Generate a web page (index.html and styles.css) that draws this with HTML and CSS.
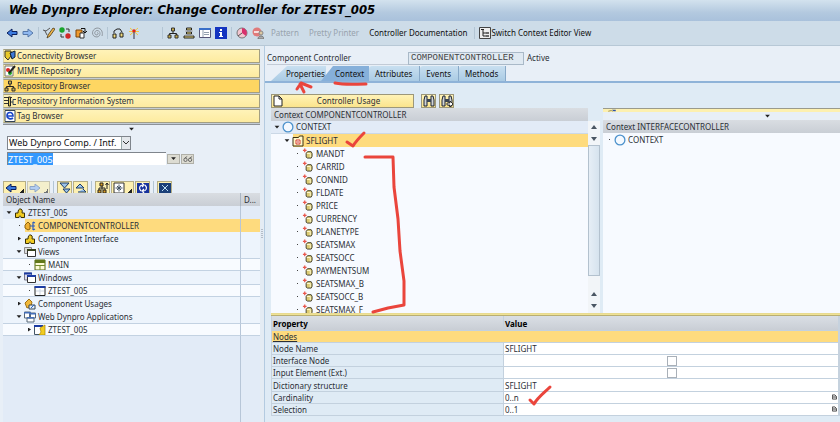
FILE: index.html
```html
<!DOCTYPE html>
<html lang="en">
<head>
    <meta charset="UTF-8">
    <meta name="viewport" content="width=device-width, initial-scale=1.0">
    <title>Web Dynpro Explorer</title>
    <link rel="stylesheet" href="styles.css">
</head>
<body>
    <!-- icon set -->
    <svg class="defs" width="0" height="0">
        <symbol id="i-back" viewBox="0 0 12 12"><path d="M1 6l5-4v2.500h5v3H6V10z" fill="#3b7be0" stroke="#0a1f5c"/></symbol>
        <symbol id="i-fwd" viewBox="0 0 12 12"><path d="M11 6L6 2v2.500H1v3h5V10z" fill="#8fb8f0" stroke="#5577a8"/></symbol>
        <symbol id="i-edit" viewBox="0 0 12 12"><path d="M0 3l3 1 4-3M2 4l2 4" stroke="#555" fill="none"/><path d="M10 1L5 8l-1 3 3-2 5-7z" fill="#f0b64a" stroke="#4a3a1a" stroke-width=".8"/></symbol>
        <symbol id="i-toggle" viewBox="0 0 12 12"><circle cx="3" cy="3" r="2.700" fill="#19a52c"/><circle cx="9" cy="9" r="2.700" fill="#d02828"/><path d="M7 2h3v3M5 10H2V7" stroke="#333" fill="none"/></symbol>
        <symbol id="i-copy" viewBox="0 0 12 12"><path d="M1 3h6v7H1z" fill="#f09a2e" stroke="#7a4408"/><path d="M5 6h4v5H5z" fill="#fff" stroke="#333"/><path d="M6 1.500h4V5M8 4l2 2 2-2" stroke="#111" fill="none"/></symbol>
        <symbol id="i-spiral" viewBox="0 0 12 12"><path d="M6 6c1-1 2 1 0 2-3 0-3-4 0-4.500 4 0 4 6 0 6.500-6 0-6-8 0-9 5 0 6 5 5 8" fill="none" stroke="#8f979f"/></symbol>
        <symbol id="i-where" viewBox="0 0 12 12"><path d="M2 6V4l3-2M5 2h3l2 3" stroke="#222" fill="none"/><path d="M1 7h3v4H1zM8 6h3v4H8z" fill="#f2dc7c" stroke="#222"/></symbol>
        <symbol id="i-wand" viewBox="0 0 12 12"><path d="M2 1l8 7M10 1L2 8M1 4.500h10" stroke="#f2c840"/><circle cx="6" cy="4" r="1.700" fill="#e02020"/><path d="M6 5v7" stroke="#667" stroke-width="1.500"/></symbol>
        <symbol id="i-tree" viewBox="0 0 12 12"><path d="M6 4v3M2.500 8V6.500h7V8" stroke="#222" fill="none"/><path d="M4.500 1h3v3h-3zM1 8h3v3H1zM8 8h3v3H8z" fill="#c9ad45" stroke="#333"/></symbol>
        <symbol id="i-stack" viewBox="0 0 12 12"><path d="M3.500 1h5v2h-5zM3.500 5h5v2h-5zM1 9h10v2H1z" fill="#f0dc7a" stroke="#222"/><path d="M2 4h8M2 8h8" stroke="#aaa"/></symbol>
        <symbol id="i-list" viewBox="0 0 12 12"><path d="M.5 1.500h11v9H.5z" fill="#fff" stroke="#557"/><path d="M0 1h12v2H0z" fill="#3a6fc8"/><path d="M4 3v7M5 5.500h5M5 7.500h5" stroke="#789" stroke-width=".8"/></symbol>
        <symbol id="i-info" viewBox="0 0 12 12"><path d="M0 0h12v12H0z" fill="#1434c0"/><path d="M5 2h2v2H5zM4 5h3v4h1v1H4V9h1V6H4z" fill="#fff"/></symbol>
        <symbol id="i-pie" viewBox="0 0 12 12"><circle cx="6" cy="6" r="5" fill="#f3c6d0" stroke="#777"/><path d="M6 6V1a5 5 0 0 1 4 8z" fill="#d8306c"/><path d="M6 6L2 9" stroke="#555"/></symbol>
        <symbol id="i-user" viewBox="0 0 12 12"><circle cx="5" cy="5" r="4.500" fill="#e07a7a"/><path d="M2 5h5" stroke="#fff" stroke-width="1.500"/><circle cx="9" cy="6" r="2" fill="#dcc7a0" stroke="#888"/><path d="M6 12c0-4 6-4 6 0z" fill="#aaa" stroke="#777"/></symbol>
        <symbol id="i-switch" viewBox="0 0 12 12"><path d="M.5.5h11v11H.5z" fill="#eee" stroke="#444"/><path d="M2 2.500h3M4 3v6h3M4 6h3" stroke="#222" fill="none"/><path d="M7 5h3v2H7zM7 8h3v2H7z" fill="#6a6a6a"/></symbol>
        <symbol id="i-conn" viewBox="0 0 12 12"><path d="M1 1h6v5l-3 4-3-3z" fill="#e8c82a" stroke="#333"/><path d="M6 3l5-2v6L8 9z" fill="#3f79d8" stroke="#123"/></symbol>
        <symbol id="i-mime" viewBox="0 0 12 12"><path d="M1 1h8v10H1z" fill="#fff" stroke="#777"/><circle cx="4" cy="5" r="2" fill="#d22"/><circle cx="6" cy="8" r="2" fill="#2a2"/><path d="M11 1L5 8" stroke="#222" stroke-width="2"/></symbol>
        <symbol id="i-ris" viewBox="0 0 12 12"><path d="M0 2.500h8M0 5.500h4M0 8.500h4" stroke="#333"/><path d="M4.500 2h2v9h-2z" fill="#d8c45a" stroke="#222"/><path d="M12 4.500H9v5h3M7 7h2" fill="none" stroke="#345"/></symbol>
        <symbol id="i-tag" viewBox="0 0 12 12"><path d="M1 .5h10v11H1z" fill="#fff" stroke="#345"/><path d="M3 6h6c0-5-6-4-6-.5S7 9.500 9 8" fill="none" stroke="#1846c8" stroke-width="1.600"/></symbol>
        <symbol id="i-glasses" viewBox="0 0 12 12"><circle cx="3" cy="7" r="2" fill="none" stroke="#555"/><circle cx="8.500" cy="7" r="2" fill="none" stroke="#555"/><path d="M2 5l3-2M8 5l3-2" stroke="#555"/></symbol>
        <symbol id="i-down" viewBox="0 0 12 12"><path d="M1 1h9L5.500 6zM4 7h7l-3.500 4z" fill="#9cc4ec" stroke="#1d3c66"/></symbol>
        <symbol id="i-up" viewBox="0 0 12 12"><path d="M1 6l4-4 4 4zM3 10h8L8 7" fill="#9cc4ec" stroke="#1d3c66"/></symbol>
        <symbol id="i-hier" viewBox="0 0 12 12"><path d="M5 3v5M2 9V6h6v3M10 1v6M8.500 3L10 1l1.500 2" stroke="#222" fill="none"/><path d="M3 1h3v3H3zM1 8h3v3H1zM6 8h3v3H6z" fill="#e0a020" stroke="#222"/></symbol>
        <symbol id="i-star" viewBox="0 0 12 12"><path d="M1 1h10v10H1z" fill="#fff" stroke="#333"/><path d="M6 2.500v7M2.500 6h7M4 4l4 4M8 4L4 8" stroke="#456"/></symbol>
        <symbol id="i-refresh" viewBox="0 0 12 12"><path d="M0 1h12v10H0z" fill="#17329c"/><path d="M4 9C1 6 3 3 6 3M8 3c3 3 1 6-2 6M5 1l2 2-2 2M7 7L5 9l2 2" fill="none" stroke="#fff" stroke-width="1.200"/></symbol>
        <symbol id="i-full" viewBox="0 0 12 12"><path d="M0 1h12v10H0z" fill="#1b4078"/><path d="M3 3l6 6M9 3L3 9" stroke="#bfe0f4"/></symbol>
        <symbol id="i-comp" viewBox="0 0 12 12"><path d="M1.500 6h2.500C4 3 5 1.500 7 2c2 1 1 3 1 4h2.500v4.500H7c0-2-2-2-2 0H1.500z" fill="#f0cb22" stroke="#3a3005"/></symbol>
        <symbol id="i-ctrl" viewBox="0 0 12 12"><path d="M1 5l3-3 2 2v5l-2 1-3-2z" fill="#f0b030" stroke="#8a6010"/><path d="M6 6h5M9 2v8M9 2l2 1M9 10l2-1" stroke="#2a5ac0" stroke-width="1.200" fill="none"/></symbol>
        <symbol id="i-views" viewBox="0 0 12 12"><path d="M.5 1.500h7v6h-7z" fill="#ddd" stroke="#888"/><path d="M3.500 3.500h8v7h-8z" fill="#fff" stroke="#333"/><path d="M3 3h9v2H3z" fill="#35401c"/></symbol>
        <symbol id="i-view" viewBox="0 0 12 12"><path d="M1 1h10v10H1z" fill="#fdfbd6" stroke="#536612"/><path d="M1 1h10v3H1z" fill="#61781a"/><path d="M1 6.500h10M6 7v4" stroke="#758c2c"/></symbol>
        <symbol id="i-wins" viewBox="0 0 12 12"><path d="M.5 1h7v7h-7z" fill="#dde" stroke="#778"/><path d="M3.500 3.500h8v7h-8z" fill="#fff" stroke="#333"/><path d="M0 .5h8v2H0zM3 3h9v2H3z" fill="#1c3ca4"/></symbol>
        <symbol id="i-win" viewBox="0 0 12 12"><path d="M1 1.500h10v9H1z" fill="#fff" stroke="#222"/><path d="M.5 1h11v2H.5z" fill="#1c3ca4"/><path d="M6 4v6M2 6h8" stroke="#cdd6e2"/></symbol>
        <symbol id="i-usage" viewBox="0 0 12 12"><path d="M1 5l4-4 3 3-1 4-4 2z" fill="#f0b83a" stroke="#a06f10"/><path d="M5 7h6v4H5z" fill="#e8eef6" stroke="#345"/><path d="M7 10l3-3" stroke="#26c"/></symbol>
        <symbol id="i-apps" viewBox="0 0 12 12"><path d="M.5 1h6v6h-6zM5.500 2h6v5h-6zM3 6.500h7V11H3z" fill="#fff" stroke="#567"/><path d="M0 1h7v1.500H0zM5 2h7v1.500H5zM3 6h7v1.500H3z" fill="#456fb8"/></symbol>
        <symbol id="i-app" viewBox="0 0 12 12"><path d="M.5 1.500h8v9h-8z" fill="#fff" stroke="#456"/><path d="M0 1h9v2H0z" fill="#1c3ca4"/><path d="M6 4l5-3v10H5l2-3z" fill="#f2cc20" stroke="#a88406" stroke-width=".7"/></symbol>
        <symbol id="i-ring" viewBox="0 0 12 12"><circle cx="6" cy="6" r="4.900" fill="#f4f9ff" stroke="#4d92cc" stroke-width="1.300"/></symbol>
        <symbol id="i-node" viewBox="0 0 12 12"><path d="M1 2.500h5.500l1-1.500H11v10H1z" fill="#fff6c8" stroke="#3a3010"/><path d="M4 5h4v4H4z" fill="#fff" stroke="#d43a2a"/><path d="M6 6v2" stroke="#d43a2a"/></symbol>
        <symbol id="i-attr" viewBox="0 0 12 12"><path d="M1 2.500h4M3 .5v4" stroke="#e8564c" stroke-width="1.400"/><path d="M4.500 6L6 4h4l1 2v3l-1 2H6l-1.500-1z" fill="#dccb72" stroke="#3c3a28"/><path d="M5.500 6H9v4" stroke="#fffbd8" fill="none"/></symbol>
        <symbol id="i-doc" viewBox="0 0 12 12"><path d="M2 1h5l3 3v7H2z" fill="#fff" stroke="#222"/><path d="M7 1v3h3" fill="none" stroke="#222"/></symbol>
        <symbol id="i-find" viewBox="0 0 12 12"><path d="M1 5l1-4h2v10H1zM11 5l-1-4H8v10h3z" fill="#d0d4d8" stroke="#1a2230"/><path d="M4 4h4v3H4z" fill="#3a4452"/></symbol>
        <symbol id="i-findnext" viewBox="0 0 12 12"><path d="M1 5l1-4h2v10H1zM11 5l-1-4H8v10h3z" fill="#d0d4d8" stroke="#1a2230"/><path d="M4 4h4v3H4z" fill="#3a4452"/><path d="M6 8h3V6l3 3-3 3v-2H6z" fill="#fff" stroke="#111" stroke-width=".8"/></symbol>
        <symbol id="i-help" viewBox="0 0 6 6"><path d="M.5.5h3l2 2v3h-5z" fill="#eee" stroke="#333"/><path d="M1 3h4" stroke="#333"/></symbol>
    </svg>

    <header class="title">Web Dynpro Explorer: Change Controller for ZTEST_005</header>

    <!-- application toolbar -->
    <nav class="toolbar">
        <button aria-label="Back"><svg><use href="#i-back"/></svg></button>
        <button aria-label="Forward"><svg><use href="#i-fwd"/></svg></button>
        <span class="sep"></span>
        <button aria-label="Edit"><svg><use href="#i-edit"/></svg></button>
        <button aria-label="Toggle"><svg><use href="#i-toggle"/></svg></button>
        <button aria-label="Copy"><svg><use href="#i-copy"/></svg></button>
        <button aria-label="Activate"><svg><use href="#i-spiral"/></svg></button>
        <span class="sep"></span>
        <button aria-label="Where used"><svg><use href="#i-where"/></svg></button>
        <button aria-label="Wizard"><svg><use href="#i-wand"/></svg></button>
        <span class="sep wide"></span>
        <button aria-label="Hierarchy"><svg><use href="#i-tree"/></svg></button>
        <button aria-label="Stack"><svg><use href="#i-stack"/></svg></button>
        <button aria-label="List"><svg><use href="#i-list"/></svg></button>
        <button aria-label="Info"><svg><use href="#i-info"/></svg></button>
        <span class="sep"></span>
        <button aria-label="Breakpoint"><svg><use href="#i-pie"/></svg></button>
        <button aria-label="External breakpoint"><svg><use href="#i-user"/></svg></button>
        <button class="txt" disabled>Pattern</button>
        <button class="txt" disabled>Pretty Printer</button>
        <button class="txt">Controller Documentation</button>
        <span class="sep"></span>
        <button class="txt switch"><svg><use href="#i-switch"/></svg>Switch Context Editor View</button>
    </nav>

    <div class="main">
        <!-- left: browsers and object list -->
        <aside class="side">
            <div class="browsers">
                <button><svg><use href="#i-conn"/></svg>Connectivity Browser</button>
                <button><svg><use href="#i-mime"/></svg>MIME Repository</button>
                <button class="current"><svg><use href="#i-tree"/></svg>Repository Browser</button>
                <button><svg><use href="#i-ris"/></svg>Repository Information System</button>
                <button><svg><use href="#i-tag"/></svg>Tag Browser</button>
            </div>
            <div class="fold"><i class="tri open"></i></div>
            <div class="pick">
                <div class="drop">
                    <select aria-label="Object type"><option>Web Dynpro Comp. / Intf.</option></select>
                    <svg class="chev" viewBox="0 0 8 8"><path d="M1 2l3 3 3-3" fill="none" stroke="#333"/></svg>
                </div>
                <div class="search">
                    <input type="text" id="objName" aria-label="Object name" value="ZTEST_005" spellcheck="false">
                    <button aria-label="History"><i class="tri open"></i></button>
                    <button aria-label="Display"><svg><use href="#i-glasses"/></svg></button>
                </div>
            </div>
            <div class="tools">
                <button class="more" aria-label="Previous object"><svg><use href="#i-back"/></svg></button>
                <button class="more off" aria-label="Next object"><svg><use href="#i-fwd"/></svg></button>
                <span class="sep"></span>
                <button aria-label="Expand"><svg><use href="#i-down"/></svg></button>
                <button aria-label="Collapse"><svg><use href="#i-up"/></svg></button>
                <span class="sep"></span>
                <button aria-label="Superior list"><svg><use href="#i-hier"/></svg></button>
                <button class="more" aria-label="Favorites"><svg><use href="#i-star"/></svg></button>
                <button aria-label="Refresh"><svg><use href="#i-refresh"/></svg></button>
                <span class="sep"></span>
                <button aria-label="Close"><svg><use href="#i-full"/></svg></button>
            </div>
            <table class="objects">
                <thead><tr><th>Object Name</th><th class="desc">D...</th></tr></thead>
                <tbody>
                    <tr><td><div class="node"><i class="tri open"></i><svg><use href="#i-comp"/></svg>ZTEST_005</div></td><td></td></tr>
                    <tr class="picked"><td><div class="node l1"><i class="dot"></i><span class="mark"><svg><use href="#i-ctrl"/></svg>COMPONENTCONTROLLER</span></div></td><td></td></tr>
                    <tr><td><div class="node l1"><i class="tri"></i><svg><use href="#i-comp"/></svg>Component Interface</div></td><td></td></tr>
                    <tr><td><div class="node l1"><i class="tri open"></i><svg><use href="#i-views"/></svg>Views</div></td><td></td></tr>
                    <tr class="leaf"><td><div class="node l2"><i class="dot"></i><svg><use href="#i-view"/></svg>MAIN</div></td><td></td></tr>
                    <tr><td><div class="node l1"><i class="tri open"></i><svg><use href="#i-wins"/></svg>Windows</div></td><td></td></tr>
                    <tr class="leaf"><td><div class="node l2"><i class="dot"></i><svg><use href="#i-win"/></svg>ZTEST_005</div></td><td></td></tr>
                    <tr><td><div class="node l1"><i class="tri"></i><svg><use href="#i-usage"/></svg>Component Usages</div></td><td></td></tr>
                    <tr><td><div class="node l1"><i class="tri open"></i><svg><use href="#i-apps"/></svg>Web Dynpro Applications</div></td><td></td></tr>
                    <tr class="leaf"><td><div class="node l2"><i class="tri"></i><svg><use href="#i-app"/></svg>ZTEST_005</div></td><td></td></tr>
                </tbody>
            </table>
            <div class="rest"><span></span></div>
        </aside>
        <div class="split"><i class="grip"></i></div>

        <!-- right: controller editor -->
        <section class="editor">
            <div class="name">
                <label for="ctrl">Component Controller</label>
                <input type="text" id="ctrl" value="COMPONENTCONTROLLER" readonly>
                <span>Active</span>
            </div>
            <div class="tabs">
                <button class="slant">Properties</button>
                <button class="slant current">Context</button>
                <button>Attributes</button>
                <button>Events</button>
                <button>Methods</button>
            </div>
            <div class="panel">
                <div class="actions">
                    <button class="usage"><svg><use href="#i-doc"/></svg><span>Controller Usage</span></button>
                    <button aria-label="Find"><svg><use href="#i-find"/></svg></button>
                    <button aria-label="Find next"><svg><use href="#i-findnext"/></svg></button>
                </div>
                <div class="trees">
                    <div class="tree">
                        <h2>Context COMPONENTCONTROLLER</h2>
                        <ul>
                            <li class="node root"><i class="tri open"></i><svg><use href="#i-ring"/></svg>CONTEXT</li>
                            <li class="node l1"><i class="tri open"></i><span class="mark"><svg><use href="#i-node"/></svg>SFLIGHT</span></li>
                            <li class="node l2"><i class="dot"></i><svg><use href="#i-attr"/></svg>MANDT</li>
                            <li class="node l2"><i class="dot"></i><svg><use href="#i-attr"/></svg>CARRID</li>
                            <li class="node l2"><i class="dot"></i><svg><use href="#i-attr"/></svg>CONNID</li>
                            <li class="node l2"><i class="dot"></i><svg><use href="#i-attr"/></svg>FLDATE</li>
                            <li class="node l2"><i class="dot"></i><svg><use href="#i-attr"/></svg>PRICE</li>
                            <li class="node l2"><i class="dot"></i><svg><use href="#i-attr"/></svg>CURRENCY</li>
                            <li class="node l2"><i class="dot"></i><svg><use href="#i-attr"/></svg>PLANETYPE</li>
                            <li class="node l2"><i class="dot"></i><svg><use href="#i-attr"/></svg>SEATSMAX</li>
                            <li class="node l2"><i class="dot"></i><svg><use href="#i-attr"/></svg>SEATSOCC</li>
                            <li class="node l2"><i class="dot"></i><svg><use href="#i-attr"/></svg>PAYMENTSUM</li>
                            <li class="node l2"><i class="dot"></i><svg><use href="#i-attr"/></svg>SEATSMAX_B</li>
                            <li class="node l2"><i class="dot"></i><svg><use href="#i-attr"/></svg>SEATSOCC_B</li>
                            <li class="node l2"><i class="dot"></i><svg><use href="#i-attr"/></svg>SEATSMAX_F</li>
                        </ul>
                    </div>
                    <div class="scroll">
                        <i class="arrow up"></i>
                        <i class="arrow"></i>
                        <div class="thumb"></div>
                        <i class="arrow up"></i>
                        <i class="arrow"></i>
                    </div>
                    <div class="tree other">
                        <div class="strip"><svg viewBox="0 0 12 4"><path d="M1 3l4-1 2 1" stroke="#8a7a3a" fill="none"/><path d="M6 1h5v2H8z" fill="#2a4fa8"/></svg></div>
                        <div class="fold"><i class="tri open"></i></div>
                        <h2>Context INTERFACECONTROLLER</h2>
                        <ul>
                            <li class="node"><i class="dot"></i><svg><use href="#i-ring"/></svg>CONTEXT</li>
                        </ul>
                    </div>
                </div>
                <div class="hsplit"></div>
                <table class="props">
                    <thead><tr><th>Property</th><th>Value</th></tr></thead>
                    <tbody>
                        <tr class="group"><td colspan="2"><a href="#">Nodes</a></td></tr>
                        <tr><th>Node Name</th><td>SFLIGHT</td></tr>
                        <tr><th><label for="ifn">Interface Node</label></th><td class="mid"><input type="checkbox" id="ifn"></td></tr>
                        <tr><th><label for="inp">Input Element (Ext.)</label></th><td class="mid"><input type="checkbox" id="inp"></td></tr>
                        <tr><th>Dictionary structure</th><td>SFLIGHT</td></tr>
                        <tr><th>Cardinality</th><td><div class="val">0..n<svg><use href="#i-help"/></svg></div></td></tr>
                        <tr><th>Selection</th><td><div class="val">0..1<svg><use href="#i-help"/></svg></div></td></tr>
                    </tbody>
                </table>
            </div>
        </section>
    </div>

    <!-- red pen marks -->
    <svg class="pen" width="840" height="422" viewBox="0 0 840 422">
        <path d="M335 83c10 2 20 1 31 1"/>
        <path d="M304 92l-4-8M297 89l4-6M301 83l10 4"/>
        <path d="M347 142l6 4c3-5 7-9 11-13"/>
        <path d="M365 157h28l1 30 4 32 2 32 4 30v24l-16 3-15 4"/>
        <path d="M530 400l4 4c4-7 10-11 16-17"/>
    </svg>

    <script>
        //选中输入框内容
        var box = document.getElementById('objName');
        box.focus();
        box.select();
    </script>
</body>
</html>
```
FILE: styles.css
```css
*{
    box-sizing: border-box;
}
body,ul,h2{
    margin: 0;
    padding: 0;
}
body{
    position: relative;
    display: flex;
    flex-direction: column;
    height: 100vh;
    overflow: hidden;
    background: #e8eff7;
    color: #2b2f36;
    font: 8px/12px "Noto Sans", sans-serif;
}
button,input,select{
    margin: 0;
    padding: 0;
    border: 0;
    border-radius: 0;
    background: none;
    color: inherit;
    font: inherit;
}
svg{
    flex: none;
    width: 12px;
    height: 12px;
}
ul{
    list-style: none;
}
.defs{
    position: absolute;
    width: 0;
    height: 0;
}
.title{
    flex: none;
    height: 21px;
    padding-left: 9px;
    background: linear-gradient(#d3e2ee, #b3c9df 60%, #a9c1db);
    color: #000;
    font: italic bold 13px/20px "DejaVu Sans Condensed", "DejaVu Sans", sans-serif;
    white-space: nowrap;
}

/* toolbar */
.toolbar{
    flex: none;
    display: flex;
    align-items: center;
    gap: 4px;
    height: 25px;
    padding-left: 6px;
    background: #cddce8;
    border-bottom: 1px solid #b7c8d6;
}
.toolbar button{
    display: flex;
    align-items: center;
    color: #111;
    white-space: nowrap;
}
.toolbar .txt{
    margin: 0 3px;
}
.toolbar .txt:disabled{
    color: #98a3ad;
}
.toolbar .switch{
    margin: 0;
}
.sep{
    width: 1px;
    height: 12px;
    background: #b3c5d4;
}
.toolbar .wide{
    margin-left: 18px;
}

.main{
    flex: 1;
    display: flex;
    min-height: 0;
}

/* left side */
.side{
    flex: none;
    display: flex;
    flex-direction: column;
    width: 260px;
    padding: 3px 0 0 3px;
}
.browsers{
    display: flex;
    flex-direction: column;
    gap: 1px;
    padding-bottom: 1px;
    border-bottom: 1px solid #8d9298;
    background: #c3ccd6;
}
.browsers button{
    display: flex;
    align-items: center;
    gap: 1px;
    height: 14px;
    border: 1px solid #a39f82;
    border-left-color: #d6d3b0;
    background: linear-gradient(#fff3b8, #fdeba0);
}
.browsers .current{
    background: #fed662;
}
.fold{
    display: flex;
    justify-content: center;
    align-items: center;
    height: 8px;
}
.side .fold{
    flex: none;
}
.tri{
    flex: none;
    width: 6px;
    height: 4px;
    background: #222;
    clip-path: polygon(33% 0, 83% 50%, 33% 100%);
}
.tri.open{
    clip-path: polygon(10% 20%, 90% 20%, 50% 90%);
}
.dot{
    flex: none;
    width: 6px;
    height: 1px;
    background: linear-gradient(#444, #444) 3px 0 / 1px 1px no-repeat;
}
.pick{
    display: flex;
    flex-direction: column;
    gap: 2px;
    padding: 3px 0 16px 4px;
}
.drop{
    position: relative;
    width: 124px;
}
.drop select{
    appearance: none;
    display: block;
    width: 100%;
    height: 14px;
    padding-left: 1px;
    border: 1px solid #7f858c;
    background: #fff;
    color: #111;
    font-size: 9px;
}
.chev{
    position: absolute;
    top: 1px;
    right: 1px;
    width: 9px;
    height: 12px;
    border-left: 1px solid #9aa;
    background: #e4e8ec;
    pointer-events: none;
}
.search{
    display: flex;
    align-items: center;
    gap: 1px;
}
.search input{
    width: 159px;
    height: 13px;
    border-top: 1px solid #7f858c;
    border-left: 1px solid #7f858c;
    background: #fff;
    font-size: 9px;
    outline: 0;
}
.search input::selection{
    background: #3298fe;
    color: #fff;
}
.search button{
    display: flex;
    justify-content: center;
    align-items: center;
    width: 13px;
    height: 10px;
    border: 1px solid #b0b0a8;
    background: #dddcd2;
}
.search svg{
    width: 10px;
    height: 10px;
}
.tools{
    flex: none;
    display: flex;
    align-items: center;
    gap: 1px;
    height: 12px;
}
.tools button{
    display: flex;
    justify-content: center;
    width: 15px;
    height: 12px;
    border: 1px solid #b5ae86;
    border-bottom: 0;
    background: #fdf0b0;
}
.tools .more{
    justify-content: flex-start;
    width: 23px;
    padding-left: 1px;
    background: linear-gradient(135deg, transparent 50%, #222 50%) right 1px bottom / 4px 4px no-repeat, #fdf0b0;
}
.tools .off{
    opacity: .6;
}
.tools .sep{
    margin: 0 2px;
}

table{
    width: 100%;
    border-collapse: separate;
    border-spacing: 0;
    table-layout: fixed;
}
th,td{
    padding: 0;
    font-weight: normal;
    text-align: left;
    overflow: hidden;
    white-space: nowrap;
}
.objects{
    flex: none;
}
.objects th,h2{
    height: 13px;
    padding-left: 3px;
    background: linear-gradient(#d9dde2, #c9ced5);
    font-weight: normal;
    font-size: 8px;
    line-height: 13px;
}
.objects .desc{
    width: 20px;
    border-left: 1px solid #a9b5c2;
}
.objects td{
    height: 13px;
    background: #edf4fc;
}
.objects td + td{
    border-left: 1px solid #b7c6d8;
}
.objects tr:first-child td{
    background: #e2ebf7;
}
.objects .leaf td{
    border-top: 1px solid #c3d2e2;
    border-bottom: 1px solid #c3d2e2;
    background: #f8fbff;
}
.objects .picked td + td{
    background: #fedb7e;
}
.node{
    display: flex;
    align-items: center;
    gap: 3px;
    height: 13px;
    padding-left: 3px;
    white-space: nowrap;
}
.objects .leaf .node{
    height: 11px;
}
.node svg{
    margin: 0 -1px;
}
.l1{
    padding-left: 13px;
}
.l2{
    padding-left: 23px;
}
.tree .l2 svg{
    width: 11px;
    height: 11px;
    margin-right: 0;
}
.mark{
    flex: 1;
    display: flex;
    align-items: center;
    gap: 3px;
    height: 13px;
    background: #fedb7e;
}
.rest{
    flex: 1;
    display: flex;
    justify-content: flex-end;
    background: #e2ebf7;
}
.rest span{
    width: 20px;
    border-left: 1px solid #b7c6d8;
}
.split{
    flex: none;
    display: flex;
    justify-content: center;
    align-items: center;
    width: 5px;
    border-right: 1px solid #b4cbe0;
    background: #e4ecf4;
}
.grip{
    width: 2px;
    height: 10px;
    background: repeating-linear-gradient(#b4bdc8 0 1px, transparent 1px 2px);
}

/* right side */
.editor{
    flex: 1;
    display: flex;
    flex-direction: column;
    min-width: 0;
}
.name{
    flex: none;
    display: flex;
    align-items: center;
    height: 20px;
    padding: 4px 0 0 2px;
}
.name label{
    width: 141px;
    height: 13px;
    border-bottom: 1px solid #c2cbd6;
}
.name input{
    width: 116px;
    height: 13px;
    margin-right: 3px;
    padding-left: 2px;
    border: 1px solid #a9b9c8;
    background: #dfe9f2;
    color: #444;
    font: 9px "Liberation Mono", monospace;
}
.tabs{
    flex: none;
    display: flex;
    height: 15px;
    padding-left: 6px;
}
.tabs button{
    padding: 0 7px 0 6px;
    background: linear-gradient(#c8dff0, #aacbe4);
    border-right: 1px solid #88a9c8;
    border-radius: 3px 0 0 0;
    color: #111;
}
.tabs .slant{
    width: 55px;
    padding: 0 0 0 15px;
    border-radius: 0;
    border: 0;
    clip-path: polygon(0 100%, 16px 0, 100% 0, 100% 100%);
    text-align: left;
}
.tabs .current{
    width: 48px;
    margin-left: -5px;
    padding-left: 14px;
    background: #86b0da;
    clip-path: polygon(0 100%, 12px 0, 100% 0, 100% 100%);
}
.panel{
    flex: 1;
    display: flex;
    flex-direction: column;
    min-height: 0;
    padding: 11px 0 6px 6px;
    border-top: 2px solid #8fb3d8;
    background: #dfebf5;
}
.actions{
    flex: none;
    display: flex;
    gap: 3px;
}
.actions button{
    display: flex;
    justify-content: center;
    align-items: center;
    width: 15px;
    height: 14px;
    border: 1px solid #9c977a;
    background: linear-gradient(#fff3b8, #fbe48c);
}
.actions .usage{
    justify-content: flex-start;
    width: 143px;
    margin-right: 4px;
}
.usage span{
    flex: 1;
    text-align: center;
}
.trees{
    flex: 1;
    display: flex;
    min-height: 0;
}
.tree{
    flex: 0 0 317px;
    overflow: hidden;
    background: #f7faff;
}
.tree .root{
    border-bottom: 1px solid #cbd8e6;
    background: #e2ebf7;
}
.other{
    flex: 1;
    margin-left: 3px;
}
.other .strip{
    height: 4px;
    border-top: 1px solid #9a9a8c;
    background: #fdf0b0;
}
.other .strip svg{
    display: block;
    height: 3px;
    margin-left: 3px;
}
.other .fold{
    padding-left: 92px;
    background: #e8eff7;
}
.scroll{
    flex: none;
    display: flex;
    flex-direction: column;
    align-items: center;
    width: 12px;
    padding: 13px 0 1px;
    background: linear-gradient(#dfebf5 13px, #f2f5f8 13px);
}
.arrow{
    width: 6px;
    height: 12px;
    background: #4a5562;
    clip-path: polygon(0 33%, 100% 33%, 50% 67%);
}
.arrow.up{
    clip-path: polygon(0 67%, 100% 67%, 50% 33%);
}
.thumb{
    flex: 1;
    align-self: stretch;
    margin-bottom: 12px;
    border: 1px solid #b3c1ce;
    background: linear-gradient(90deg, #e6eef6, #d6e3ee);
}
.hsplit{
    flex: none;
    height: 3px;
    border-top: 1px solid #e8da90;
    border-bottom: 1px solid #b8ae74;
    background: #efe294;
}

/* property table */
.props{
    flex: none;
    height: 100px;
    line-height: 11px;
    border-left: 1px solid #c6d2de;
    border-right: 2px solid #c6d2de;
}
.props thead th{
    height: 15px;
    background: linear-gradient(#dadfe5, #c9ced5);
    color: #000;
    font-weight: bold;
}
.props th,.props td{
    padding-left: 1px;
    border-bottom: 1px solid #c3d1de;
}
.props th:first-child{
    width: 232px;
    border-right: 1px solid #c3d1de;
}
.props td{
    background: #fff;
}
.props .group td{
    height: 12px;
    background: #fedb7e;
}
.props a{
    color: inherit;
}
.props .mid{
    text-align: center;
    line-height: 0;
}
.props input{
    appearance: none;
    width: 10px;
    height: 10px;
    border: 1px solid #a9b0b8;
    background: #fff;
}
.val{
    display: flex;
    justify-content: space-between;
    align-items: center;
    padding-right: 1px;
}
.val svg{
    width: 5px;
    height: 6px;
}

.pen{
    position: absolute;
    top: 0;
    left: 0;
    width: 840px;
    height: 422px;
    pointer-events: none;
    fill: none;
    stroke: #ea453c;
    stroke-width: 3;
    stroke-linecap: round;
    stroke-linejoin: round;
}
```
